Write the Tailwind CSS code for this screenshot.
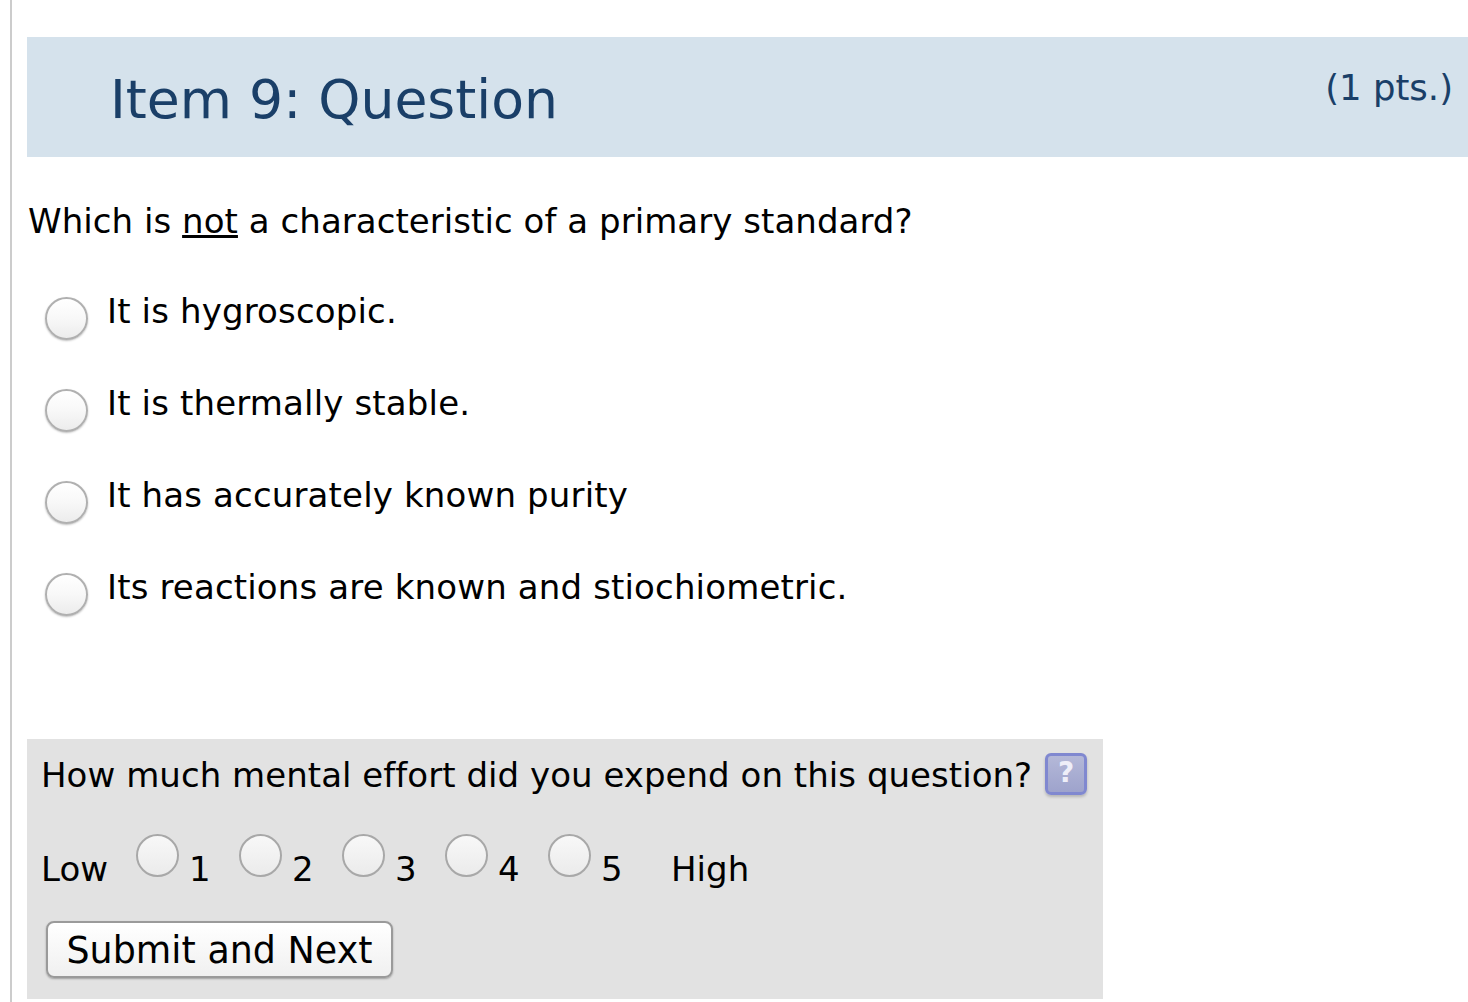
<html lang="en">
<head>
  <meta charset="utf-8" />
  <title>Item 9: Question</title>
  <script src="https://cdn.jsdelivr.net/npm/@tailwindcss/browser@4"></script>
</head>
<body class="bg-white text-black font-['DejaVu_Sans',sans-serif] overflow-hidden">
  <div class="ml-[10px] h-[1002px] w-[1458px] border-l-2 border-[#cccccc] pl-[15px] pt-[37px]">
    <div class="flex justify-between h-[120px] bg-[#d5e2ec] text-[#1a3f68]">
      <h1 class="pl-[83px] pt-[31px] text-[53.6px] leading-[64px]">Item 9: Question</h1>
      <span class="pr-[15px] pt-[29px] text-[35.5px] leading-[44px]">(1 pts.)</span>
    </div>

    <p class="mt-[43px] pl-[1px] text-[34px] leading-[42px] tracking-[0.05px]">Which is <u>not</u> a characteristic of a primary standard?</p>

    <ul class="mt-[48px] space-y-[50px] text-[34px] leading-[42px] tracking-[0.15px]">
      <li class="flex h-[42px]">
        <span class="mt-[7px] ml-[18px] mr-[19px] size-[43px] shrink-0 rounded-full border-2 border-[#b0b0b0] bg-gradient-to-b from-white via-[#f8f8f8] to-[#ececec] shadow-[0_1px_2px_rgba(0,0,0,0.25)]"></span>
        <span>It is hygroscopic.</span>
      </li>
      <li class="flex h-[42px]">
        <span class="mt-[7px] ml-[18px] mr-[19px] size-[43px] shrink-0 rounded-full border-2 border-[#b0b0b0] bg-gradient-to-b from-white via-[#f8f8f8] to-[#ececec] shadow-[0_1px_2px_rgba(0,0,0,0.25)]"></span>
        <span>It is thermally stable.</span>
      </li>
      <li class="flex h-[42px]">
        <span class="mt-[7px] ml-[18px] mr-[19px] size-[43px] shrink-0 rounded-full border-2 border-[#b0b0b0] bg-gradient-to-b from-white via-[#f8f8f8] to-[#ececec] shadow-[0_1px_2px_rgba(0,0,0,0.25)]"></span>
        <span>It has accurately known purity</span>
      </li>
      <li class="flex h-[42px]">
        <span class="mt-[7px] ml-[18px] mr-[19px] size-[43px] shrink-0 rounded-full border-2 border-[#b0b0b0] bg-gradient-to-b from-white via-[#f8f8f8] to-[#ececec] shadow-[0_1px_2px_rgba(0,0,0,0.25)]"></span>
        <span>Its reactions are known and stiochiometric.</span>
      </li>
    </ul>

    <div class="mt-[131px] h-[260px] w-[1076px] bg-[#e2e2e2] pl-[14px] pt-[14px] text-[34px] leading-[44px] tracking-[0.04px]">
      <div class="flex items-center whitespace-nowrap">
        <span>How much mental effort did you expend on this question?</span>
        <span class="ml-[13px] -mt-[2px] flex size-[42px] items-center justify-center rounded-[6px] border-[3px] border-[#8088d0] bg-gradient-to-b from-[#b4b8d8] to-[#9ea3cc] pb-[2px] text-[28px] font-bold leading-none text-[#eeeef8] shadow-[0_2px_3px_rgba(0,0,0,0.2)]">?</span>
      </div>
      <div class="mt-[50px] flex h-[44px] items-start">
        <span class="w-[95px]">Low</span>
        <span class="-mt-[13px] size-[43px] shrink-0 rounded-full border-2 border-[#a8a8a8] bg-gradient-to-b from-[#f8f8f8] to-[#ebebeb]"></span>
        <span class="ml-[10px] w-[50px]">1</span>
        <span class="-mt-[13px] size-[43px] shrink-0 rounded-full border-2 border-[#a8a8a8] bg-gradient-to-b from-[#f8f8f8] to-[#ebebeb]"></span>
        <span class="ml-[10px] w-[50px]">2</span>
        <span class="-mt-[13px] size-[43px] shrink-0 rounded-full border-2 border-[#a8a8a8] bg-gradient-to-b from-[#f8f8f8] to-[#ebebeb]"></span>
        <span class="ml-[10px] w-[50px]">3</span>
        <span class="-mt-[13px] size-[43px] shrink-0 rounded-full border-2 border-[#a8a8a8] bg-gradient-to-b from-[#f8f8f8] to-[#ebebeb]"></span>
        <span class="ml-[10px] w-[50px]">4</span>
        <span class="-mt-[13px] size-[43px] shrink-0 rounded-full border-2 border-[#a8a8a8] bg-gradient-to-b from-[#f8f8f8] to-[#ebebeb]"></span>
        <span class="ml-[10px] w-[70px]">5</span>
        <span>High</span>
      </div>
      <button class="mt-[30px] ml-[5px] block h-[57px] w-[347px] rounded-[8px] border-2 border-[#9a9a9a] bg-gradient-to-b from-white to-[#f0f0f0] pt-[4px] text-[36.4px] leading-none shadow-[0_1px_2px_rgba(0,0,0,0.3)]">Submit and Next</button>
    </div>
  </div>
</body>
</html>
